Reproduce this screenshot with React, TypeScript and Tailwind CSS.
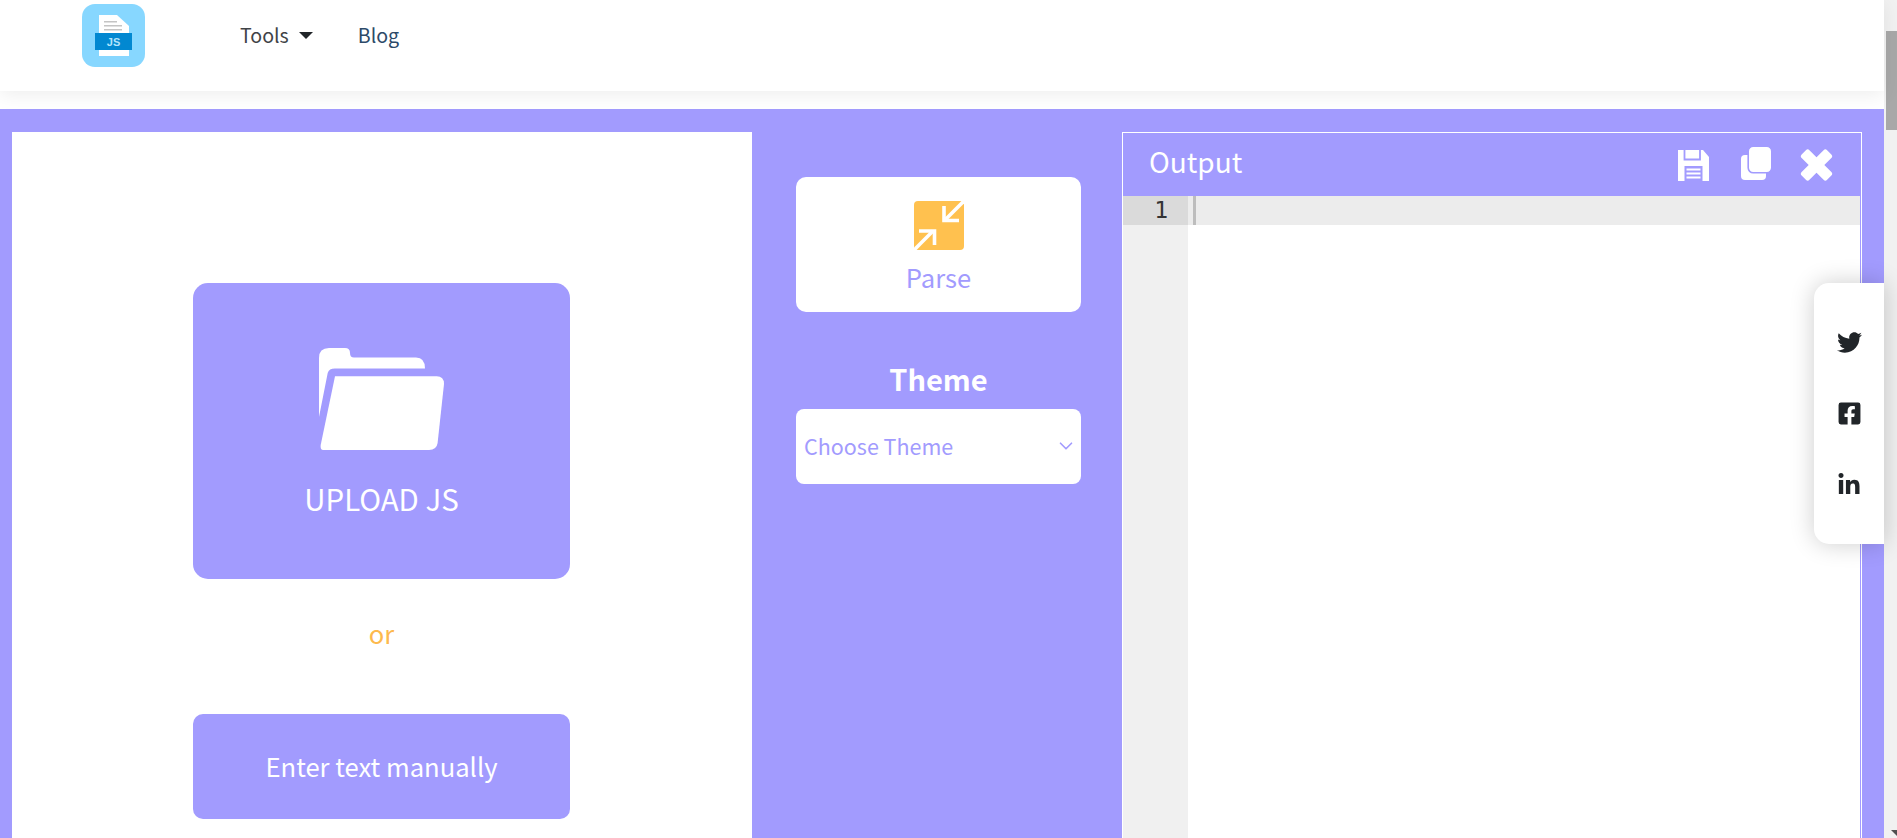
import React from 'react';
import { ChevronDown } from 'lucide-react';
import { FaTwitter, FaFacebookSquare, FaLinkedinIn } from 'react-icons/fa';

const Logo = () => (
  <svg width="63" height="63" viewBox="0 0 63 63" className="block">
    <rect x="0" y="0" width="63" height="63" rx="13" fill="#87d7ff" />
    <path d="M17 11H35L47 22V52H17Z" fill="#ffffff" />
    <rect x="22" y="17" width="13" height="1.5" fill="#c4c4c4" />
    <rect x="22" y="21" width="18" height="1.5" fill="#c4c4c4" />
    <rect x="22" y="25" width="18" height="1.5" fill="#c4c4c4" />
    <rect x="13" y="29" width="37" height="17" fill="#0288d1" />
    <text x="31.5" y="42" textAnchor="middle" fontSize="11" fontWeight="700" fill="#b3e5fc" fontFamily="'Liberation Sans', sans-serif">JS</text>
  </svg>
);

const FolderIcon = () => (
  <svg width="125" height="102" viewBox="0 0 125 102" className="block">
    <path d="M0 69V10Q0 0 10 0H26Q31 0 31 5Q31 9.5 35 9.5H97Q106 9.5 106 20.6H16Q10 20.6 8.7 25Z" fill="#ffffff" />
    <path d="M16 28.3H117.7Q125 28.3 125 36L118.6 95Q117.5 102 110 102H4.3Q1 102 1.7 97Z" fill="#ffffff" />
  </svg>
);

const ParseIcon = () => (
  <svg width="50" height="49" viewBox="0 0 50 49" className="block">
    <rect width="50" height="49" rx="4" fill="#ffc14f" />
    <g stroke="#ffffff" strokeWidth="3.6" fill="none">
      <path d="M50 0L31 19" />
      <path d="M30 5V19.5H45" />
      <path d="M0 49L19 30" />
      <path d="M5 30H20.5V44" />
    </g>
  </svg>
);

const SaveIcon = () => (
  <svg width="31" height="31" viewBox="0 0 31 31" className="mt-[17px] block">
    <path d="M0 0H25L31 7V31H0Z" fill="#ffffff" />
    <path d="M6.5 0V9.5H22V0" fill="none" stroke="#a29bfe" strokeWidth="1.8" />
    <rect x="6.5" y="16" width="18" height="15" fill="#a29bfe" />
    <rect x="8.5" y="18.5" width="14" height="2" fill="#ffffff" />
    <rect x="8.5" y="22.5" width="14" height="2" fill="#ffffff" />
    <rect x="8.5" y="26.5" width="14" height="2" fill="#ffffff" />
  </svg>
);

const CopyIcon = () => (
  <svg width="30" height="33" viewBox="0 0 30 33" className="mt-[14px] block">
    <rect x="0" y="8" width="25" height="25" rx="4" fill="#ffffff" />
    <rect x="7.2" y="-0.8" width="23.6" height="26.6" rx="5" fill="#ffffff" stroke="#a29bfe" strokeWidth="1.6" />
  </svg>
);

const CloseIcon = () => (
  <svg width="33" height="32" viewBox="0 0 33 32" className="mt-[16px] block">
    <rect x="-1.5" y="10.5" width="36" height="11" rx="2.5" fill="#ffffff" transform="rotate(45 16.5 16)" />
    <rect x="-1.5" y="10.5" width="36" height="11" rx="2.5" fill="#ffffff" transform="rotate(-45 16.5 16)" />
  </svg>
);

const App = () => {
  return (
    <div className="relative flex h-[838px] overflow-hidden bg-white font-['Noto_Sans_CJK_SC',sans-serif]">
      <div className="flex min-w-0 flex-1 flex-col">
        {/* Navbar */}
        <header className="relative z-10 flex h-[91px] shrink-0 items-start bg-white pl-[82px] pt-[4px] shadow-[0_4px_18px_rgba(0,0,0,0.07)]">
          <Logo />
          <nav className="ml-[95px] flex items-center pt-[16px] text-[19.6px] leading-[30px]">
            <span className="flex items-center text-[#3f4347]">
              Tools
              <span className="ml-[10px] h-0 w-0 border-x-[7px] border-t-[7px] border-x-transparent border-t-[#212529]" />
            </span>
            <span className="ml-[45px] text-[#2d4a69]">Blog</span>
          </nav>
        </header>

        {/* Tool area */}
        <main className="mt-[18px] flex flex-1 bg-[#a29bfe] pl-[12px] pr-[22px] pt-[23px]">
          <section className="flex w-[740px] shrink-0 flex-col items-center bg-white pr-[1px] pt-[151px]">
            <div className="flex h-[296px] w-[377px] flex-col items-center rounded-[15px] bg-[#a29bfe] pt-[65px] text-white">
              <FolderIcon />
              <span className="mt-[26px] text-[29.4px] leading-[44px]">UPLOAD JS</span>
            </div>
            <span className="mt-[34px] text-[25.6px] leading-[40px] text-[#fdb94d]">or</span>
            <div className="mt-[61px] flex h-[105px] w-[377px] items-center justify-center rounded-[10px] bg-[#a29bfe] text-[25.6px] text-white">
              Enter text manually
            </div>
          </section>

          <section className="flex w-[370px] shrink-0 flex-col pl-[44px] pr-[41px] pt-[45px]">
            <div className="flex h-[135px] flex-col items-center rounded-[10px] bg-white pt-[24px]">
              <ParseIcon />
              <span className="mt-[7px] text-[25.6px] leading-[40px] text-[#a29bfe]">Parse</span>
            </div>
            <span className="mt-[41px] pb-[6px] text-center text-[29px] font-bold leading-[50px] text-white">Theme</span>
            <div className="flex h-[75px] items-center justify-between rounded-[8px] bg-white pl-[8px] pr-[4px] text-[21.5px] text-[#a29bfe]">
              Choose Theme
              <ChevronDown size={22} strokeWidth={1.8} className="mb-[2px]" />
            </div>
          </section>

          <section className="flex w-[740px] shrink-0 flex-col border-x border-t border-white">
            <div className="flex h-[63px] shrink-0 items-start justify-between pl-[26px] pr-[28px] text-white">
              <span className="mt-[6px] text-[28px] leading-[44px]">Output</span>
              <div className="flex items-start">
                <SaveIcon />
                <span className="ml-[32px]"><CopyIcon /></span>
                <span className="ml-[29px]"><CloseIcon /></span>
              </div>
            </div>
            <div className="flex flex-1 border-r border-[#a29bfe] bg-white">
              <div className="w-[65px] shrink-0 bg-[#f0f0f0]">
                <div className="h-[29px] bg-[#dadada] pr-[20px] text-right font-['DejaVu_Sans_Mono',monospace] text-[23px] leading-[29px] text-[#333333]">
                  1
                </div>
              </div>
              <div className="h-[29px] flex-1 bg-[#ececec] pl-[5px]">
                <div className="h-full w-[3px] bg-[#bdbdbd]" />
              </div>
            </div>
          </section>
        </main>
      </div>

      {/* Scrollbar */}
      <div className="relative w-[13px] shrink-0 bg-[#f1f1f1] pl-[2px] pt-[31px]">
        <div className="h-[99px] bg-[#a8a8a8]" />
        <div className="absolute bottom-[2px] right-0 h-0 w-0 border-l-[6px] border-r-0 border-t-[6px] border-l-transparent border-t-[#505050]" />
      </div>

      {/* Share widget */}
      <aside className="absolute right-[13px] top-[283px] z-20 flex h-[261px] w-[70px] flex-col items-center rounded-l-[15px] bg-white pt-[47px] text-[#212529] shadow-[0_0_24px_rgba(0,0,0,0.2)]">
        <FaTwitter size={25} />
        <FaFacebookSquare size={25} className="mt-[46px]" />
        <FaLinkedinIn size={24} className="mt-[47px]" />
      </aside>
    </div>
  );
};

export default App;
